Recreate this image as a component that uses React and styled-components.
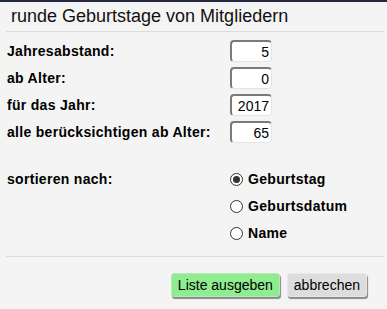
import * as React from 'react';
import styled, { createGlobalStyle } from 'styled-components';

const GlobalStyle = createGlobalStyle`
  html, body {
    margin: 0;
    padding: 0;
    background: #f4f4f4;
  }
  body {
    font-family: "Liberation Sans", Arial, sans-serif;
    color: #000;
  }
`;

const fields = [
  { label: 'Jahresabstand:', value: '5' },
  { label: 'ab Alter:', value: '0' },
  { label: 'für das Jahr:', value: '2017' },
  { label: 'alle berücksichtigen ab Alter:', value: '65' },
];

const sortOptions = ['Geburtstag', 'Geburtsdatum', 'Name'];

export default function App() {
  const [sort, setSort] = React.useState('Geburtstag');

  return (
    <Dialog>
      <GlobalStyle />
      <Title>runde Geburtstage von Mitgliedern</Title>
      <Divider />
      <FieldGrid>
        {fields.map(f => (
          <React.Fragment key={f.label}>
            <Label>{f.label}</Label>
            <NumberInput defaultValue={f.value} />
          </React.Fragment>
        ))}
      </FieldGrid>
      <SortRow>
        <Label>sortieren nach:</Label>
        <RadioList>
          {sortOptions.map(opt => (
            <RadioLabel key={opt}>
              <Radio
                type="radio"
                name="sort"
                checked={sort === opt}
                onChange={() => setSort(opt)}
              />
              {opt}
            </RadioLabel>
          ))}
        </RadioList>
      </SortRow>
      <Divider bottom />
      <ButtonBar>
        <Button primary>Liste ausgeben</Button>
        <Button>abbrechen</Button>
      </ButtonBar>
    </Dialog>
  );
}

const Dialog = styled.div`
  width: 387px;
  height: 309px;
  box-sizing: border-box;
  border-top: 2px solid #22263f;
  background: #f4f4f4;
  display: flex;
  flex-direction: column;
`;

const Title = styled.div`
  height: 29px;
  padding-left: 11px;
  font-size: 18px;
  line-height: 28px;
  color: #111;
`;

const Divider = styled.div`
  height: 1px;
  background: #dcdcdc;
  margin: ${p => (p.bottom ? '12px 3px 0 6px' : '0 3px 0 6px')};
`;

const FieldGrid = styled.div`
  display: grid;
  grid-template-columns: 223px 42px;
  row-gap: 5px;
  padding: 8px 0 0 7px;
  align-items: center;
`;

const Label = styled.div`
  font-size: 14px;
  font-weight: bold;
  letter-spacing: 0.3px;
  line-height: 22px;
`;

const NumberInput = styled.input`
  box-sizing: border-box;
  width: 42px;
  height: 22px;
  margin: 0;
  padding: 0 2px 0 0;
  border-style: solid;
  border-width: 2px 1px 1px 2px;
  border-color: #7a7a7a #e4e4e4 #e4e4e4 #7a7a7a;
  border-radius: 4px;
  background: #fff;
  text-align: right;
  font-family: "Liberation Sans", Arial, sans-serif;
  font-size: 14px;
  color: #000;
  outline: none;
`;

const SortRow = styled.div`
  display: grid;
  grid-template-columns: 223px 1fr;
  padding: 25px 0 0 7px;
  align-items: start;
`;

const RadioList = styled.div`
  display: flex;
  flex-direction: column;
  gap: 5px;
`;

const RadioLabel = styled.label`
  display: flex;
  align-items: center;
  gap: 5px;
  height: 22px;
  font-size: 14px;
  font-weight: bold;
  letter-spacing: 0.3px;
  cursor: pointer;
`;

const Radio = styled.input`
  appearance: none;
  box-sizing: border-box;
  width: 13px;
  height: 13px;
  margin: 0;
  border: 1px solid #333;
  border-radius: 50%;
  background: #fff;
  display: grid;
  place-items: center;

  &:checked::before {
    content: '';
    width: 7px;
    height: 7px;
    border-radius: 50%;
    background: #333;
  }
`;

const ButtonBar = styled.div`
  display: flex;
  justify-content: flex-end;
  gap: 7px;
  padding: 16px 20px 0 0;
`;

const Button = styled.button`
  box-sizing: border-box;
  height: 24px;
  padding: 0 6px;
  border: 1px solid ${p => (p.primary ? '#b8e8b8' : '#e8e8e8')};
  border-radius: 3px;
  background: ${p => (p.primary ? '#8fec8f' : '#dddddd')};
  box-shadow: 1px 2px 1px #8a8a8a;
  font-family: "Liberation Sans", Arial, sans-serif;
  font-size: 14px;
  color: #000;
  cursor: pointer;
`;
